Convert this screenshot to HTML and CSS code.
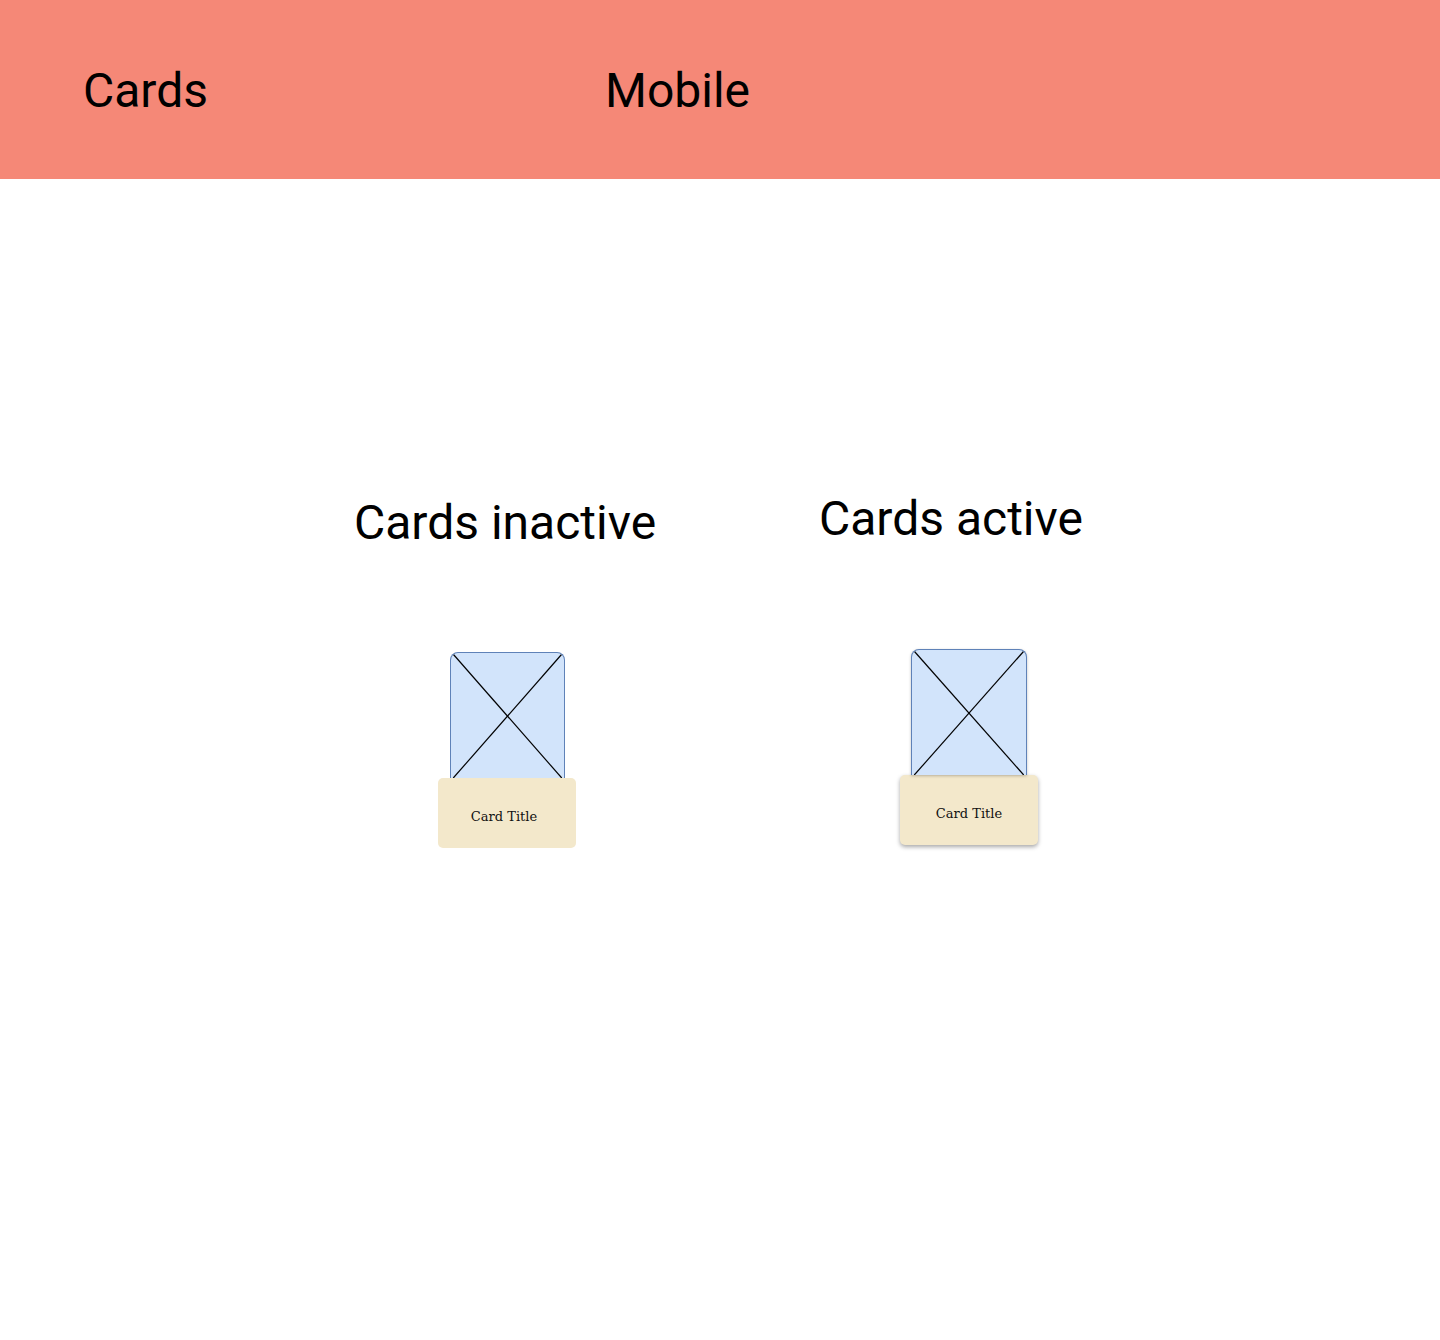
FILE: index.html
```html
<!DOCTYPE html>
<html lang="en">
<head>
<meta charset="utf-8">
<title>Cards – Mobile</title>
<link rel="stylesheet" href="styles.css">
</head>
<body>
<header class="header">
  <h1 class="header-title header-title--first">Cards</h1>
  <h1 class="header-title">Mobile</h1>
</header>
<main class="board">
  <section class="column column--inactive">
    <h2 class="column-heading">Cards inactive</h2>
    <div class="card">
      <div class="card-image">
        <svg class="card-cross" viewBox="0 0 100 100" preserveAspectRatio="none">
          <line x1="2" y1="1" x2="98" y2="100" vector-effect="non-scaling-stroke"/>
          <line x1="98" y1="1" x2="2" y2="100" vector-effect="non-scaling-stroke"/>
        </svg>
      </div>
      <div class="card-title"><span class="card-title-text">Card Title</span></div>
    </div>
  </section>
  <section class="column column--active">
    <h2 class="column-heading">Cards active</h2>
    <div class="card card--active">
      <div class="card-image">
        <svg class="card-cross" viewBox="0 0 100 100" preserveAspectRatio="none">
          <line x1="2" y1="1" x2="98" y2="100" vector-effect="non-scaling-stroke"/>
          <line x1="98" y1="1" x2="2" y2="100" vector-effect="non-scaling-stroke"/>
        </svg>
      </div>
      <div class="card-title"><span class="card-title-text">Card Title</span></div>
    </div>
  </section>
</main>
</body>
</html>
```
FILE: styles.css
```css
html, body {
  margin: 0;
  padding: 0;
  background: #ffffff;
}

body {
  font-family: Roboto, "Liberation Sans", sans-serif;
  color: #000000;
  min-height: 1340px;
}

.header {
  display: flex;
  align-items: flex-start;
  height: 179px;
  box-sizing: border-box;
  padding: 63px 0 0 83px;
  background: #f58877;
}

.header-title {
  margin: 0;
  font-size: 48px;
  font-weight: 400;
  line-height: 56px;
}

.header-title--first {
  width: 522px;
}

.board {
  display: flex;
  align-items: flex-start;
  padding-left: 354px;
}

.column {
  display: flex;
  flex-direction: column;
  align-items: flex-start;
}

.column--inactive {
  width: 465px;
  margin-top: 316px;
}

.column--active {
  margin-top: 312px;
}

.column-heading {
  margin: 0;
  font-size: 48px;
  font-weight: 400;
  line-height: 56px;
  white-space: nowrap;
}

.card {
  display: flex;
  flex-direction: column;
  align-items: flex-start;
  margin-top: 101px;
}

.card--active {
  margin-top: 102px;
}

.card-image {
  position: relative;
  width: 115px;
  height: 126px;
  box-sizing: border-box;
  margin-left: 96px;
  background: #d2e4fb;
  border: 1px solid #5f82b8;
  border-bottom: none;
  border-radius: 8px 8px 0 0;
  overflow: hidden;
}

.card--active .card-image {
  width: 116px;
  margin-left: 92px;
  box-shadow: 0 1px 3px rgba(0, 0, 0, 0.25);
}

.card-cross {
  display: block;
  width: 100%;
  height: 100%;
}

.card-cross line {
  stroke: #000000;
  stroke-width: 1.2;
}

.card-title {
  display: flex;
  align-items: center;
  justify-content: center;
  width: 138px;
  height: 70px;
  margin-left: 84px;
  background: #f3e8cb;
  border-radius: 5px;
  font-family: "DejaVu Serif", "Liberation Serif", serif;
  font-size: 13px;
  color: #111111;
}

.card-title-text {
  margin: 6px 6px 0 0;
}

.card--active .card-title {
  margin-left: 81px;
  box-shadow: 0 2px 4px rgba(0, 0, 0, 0.35);
}

.card--active .card-title-text {
  margin: 6px 0 0 0;
}
```
